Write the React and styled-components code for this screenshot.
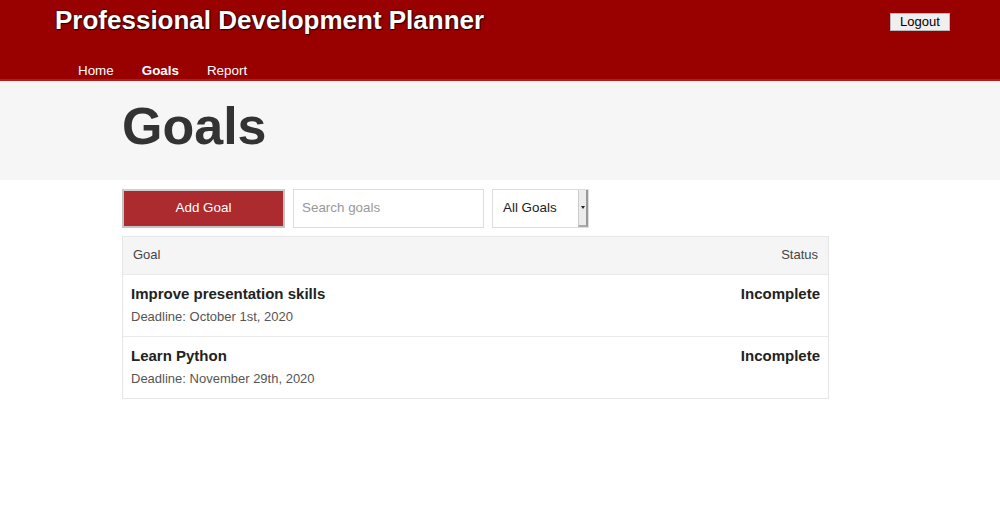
import React from "react";
import styled, { createGlobalStyle } from "styled-components";

const Global = createGlobalStyle`
  html, body { margin: 0; padding: 0; background: #fff; }
  body { font-family: "Liberation Sans", Arial, sans-serif; }
  * { box-sizing: border-box; }
`;

const Header = styled.header`
  background: #990000;
  height: 81px;
  border-bottom: 2px solid #b31b1b;
  display: flex;
  flex-direction: column;
`;

const TopRow = styled.div`
  flex-shrink: 0;
  display: flex;
  justify-content: space-between;
  align-items: flex-start;
  padding: 5px 50px 0 55px;
  height: 52px;
`;

const Title = styled.h1`
  margin: 0;
  color: #fff;
  font-size: 26px;
  font-weight: bold;
  line-height: 30px;
  text-shadow: 0 0 2px #000, 1px 1px 1px #300;
`;

const LogoutButton = styled.button`
  margin-top: 8px;
  width: 60px;
  height: 18px;
  padding: 0;
  background: #efefef;
  border: 1px solid #bbb;
  font-family: "Liberation Sans", Arial, sans-serif;
  font-size: 13px;
  color: #000;
  line-height: 16px;
`;

const Nav = styled.nav`
  flex-shrink: 0;
  display: flex;
  gap: 28px;
  padding: 10px 0 0 78px;
  height: 27px;
  align-items: center;
`;

const NavLink = styled.a`
  color: #fff;
  font-size: 13.4px;
  line-height: 16px;
  font-weight: ${(p) => (p.$active ? "bold" : "normal")};
  text-decoration: none;
`;

const Band = styled.section`
  background: #f6f6f6;
  height: 99px;
  padding-left: 122px;
  display: flex;
  align-items: center;
`;

const PageTitle = styled.h2`
  margin: 0 0 10px 0;
  font-size: 52px;
  font-weight: bold;
  color: #333;
  line-height: 60px;
`;

const Main = styled.main`
  margin-left: 122px;
  width: 707px;
  padding-top: 9px;
`;

const Controls = styled.div`
  display: flex;
  gap: 8px;
  height: 39px;
`;

const AddButton = styled.button`
  width: 163px;
  height: 39px;
  padding: 0 0 3px 0;
  background: #ab2b2f;
  border: 2px solid #c4c4c4;
  border-top-color: #d0d0d0;
  color: #fff;
  font-family: "Liberation Sans", Arial, sans-serif;
  font-size: 13.4px;
`;

const SearchInput = styled.input`
  width: 191px;
  height: 39px;
  border: 1px solid #ddd;
  padding: 0 8px 3px 8px;
  font-family: "Liberation Sans", Arial, sans-serif;
  font-size: 13.4px;
  &::placeholder { color: #999; }
`;

const SelectBox = styled.div`
  width: 97px;
  height: 39px;
  border: 1px solid #ddd;
  display: flex;
  align-items: stretch;
`;

const SelectLabel = styled.span`
  flex: 1;
  display: flex;
  align-items: center;
  padding: 0 0 3px 10px;
  font-size: 13.4px;
  color: #222;
`;

const SelectArrow = styled.span`
  width: 10px;
  background: #ececec;
  border-left: 1px solid #ccc;
  border-right: 2px solid #999;
  border-bottom: 2px solid #aaa;
  display: flex;
  align-items: center;
  justify-content: center;
  &::after {
    content: "";
    border-left: 2px solid transparent;
    border-right: 2px solid transparent;
    border-top: 3px solid #222;
  }
`;

const Table = styled.div`
  margin-top: 8px;
  border: 1px solid #e6e6e6;
`;

const HeadRow = styled.div`
  display: flex;
  justify-content: space-between;
  align-items: center;
  height: 37px;
  background: #f5f5f5;
  padding: 0 10px 2px 10px;
  font-size: 13px;
  color: #444;
`;

const Row = styled.div`
  display: flex;
  justify-content: space-between;
  height: 62px;
  border-top: 1px solid #eaeaea;
  padding: 9px 8px 0 8px;
`;

const GoalInfo = styled.div`
  display: flex;
  flex-direction: column;
  gap: 4px;
`;

const GoalTitle = styled.div`
  font-size: 15px;
  font-weight: bold;
  color: #222;
  line-height: 20px;
`;

const Deadline = styled.div`
  font-size: 13px;
  color: #555;
  line-height: 17px;
`;

const Status = styled.div`
  font-size: 15px;
  font-weight: bold;
  color: #222;
  line-height: 20px;
`;

const goals = [
  { title: "Improve presentation skills", deadline: "October 1st, 2020", status: "Incomplete" },
  { title: "Learn Python", deadline: "November 29th, 2020", status: "Incomplete" },
];

export default function App() {
  return (
    <>
      <Global />
      <Header>
        <TopRow>
          <Title>Professional Development Planner</Title>
          <LogoutButton>Logout</LogoutButton>
        </TopRow>
        <Nav>
          <NavLink href="#">Home</NavLink>
          <NavLink href="#" $active>Goals</NavLink>
          <NavLink href="#">Report</NavLink>
        </Nav>
      </Header>
      <Band>
        <PageTitle>Goals</PageTitle>
      </Band>
      <Main>
        <Controls>
          <AddButton>Add Goal</AddButton>
          <SearchInput placeholder="Search goals" />
          <SelectBox>
            <SelectLabel>All Goals</SelectLabel>
            <SelectArrow />
          </SelectBox>
        </Controls>
        <Table>
          <HeadRow>
            <span>Goal</span>
            <span>Status</span>
          </HeadRow>
          {goals.map((g) => (
            <Row key={g.title}>
              <GoalInfo>
                <GoalTitle>{g.title}</GoalTitle>
                <Deadline>Deadline: {g.deadline}</Deadline>
              </GoalInfo>
              <Status>{g.status}</Status>
            </Row>
          ))}
        </Table>
      </Main>
    </>
  );
}
